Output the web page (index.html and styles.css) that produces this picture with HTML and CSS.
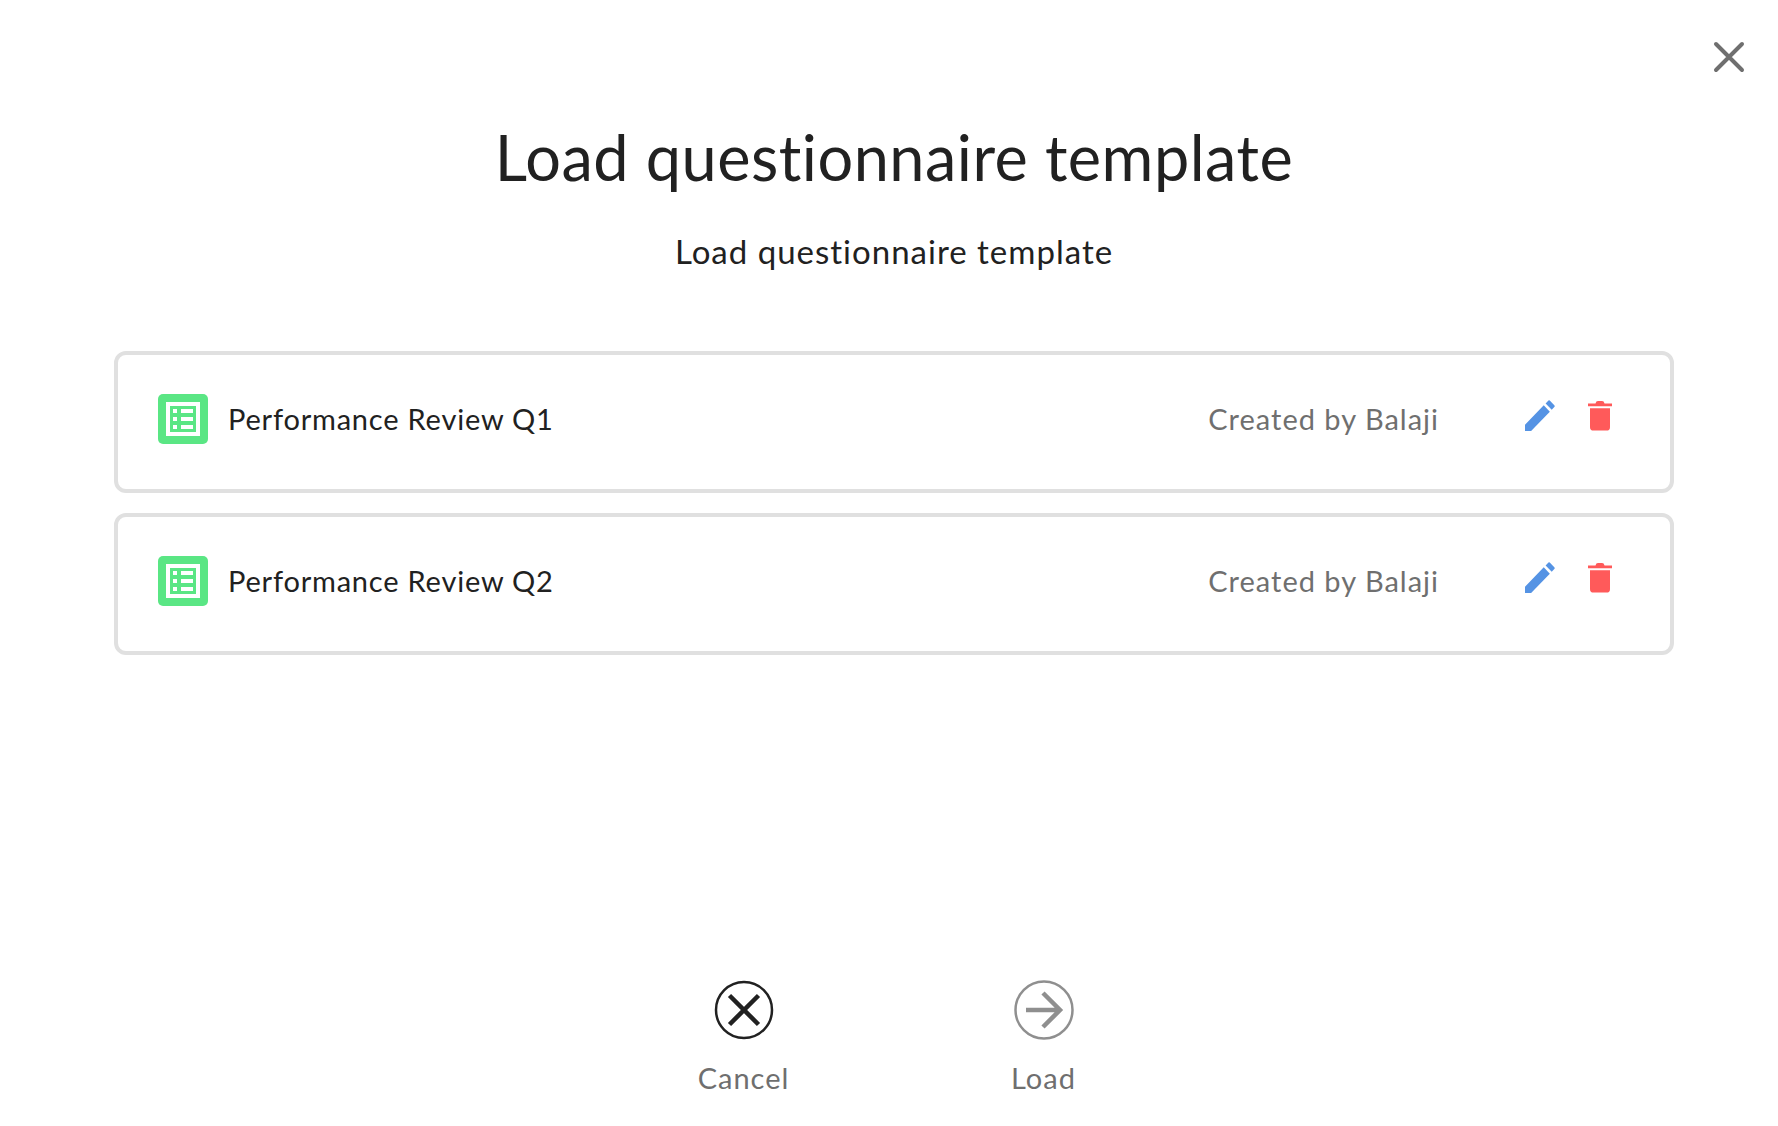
FILE: index.html
```html
<!DOCTYPE html>
<html lang="en">

<head>
    <meta charset="UTF-8">
    <title>Load questionnaire template</title>
    <link rel="stylesheet" href="styles.css">
</head>

<body>
    <div class="modal">
        <button class="close" aria-label="Close">
            <svg width="32" height="32" viewBox="0 0 32 32"><path d="M3 3 L29 29 M29 3 L3 29" /></svg>
        </button>

        <h1>Load questionnaire template</h1>
        <p class="subtitle">Load questionnaire template</p>

        <div class="list">
            <div class="row">
                <span class="form-icon">
                    <svg width="34" height="34" viewBox="0 0 34 34">
                        <rect x="2" y="2" width="30" height="30" />
                        <path d="M7 9h4M15 9h12M7 17h4M15 17h12M7 25h4M15 25h12" />
                    </svg>
                </span>
                <span class="name">Performance Review Q1</span>
                <span class="author">Created by Balaji</span>
                <svg class="edit" width="30" height="31" viewBox="0 0 32 32" preserveAspectRatio="none">
                    <path d="M0 32V25.5L20 5.5L26.5 12L6.5 32Z M22 3.5L25 0.5Q25.7 0 26.4 0.5L31.5 5.6Q32 6.3 31.5 7L28.5 10Z" />
                </svg>
                <svg class="trash" width="24" height="31" viewBox="0 0 24 32" preserveAspectRatio="none">
                    <path d="M0 3.5H7.5Q8 1 10 1H14Q16 1 16.5 3.5H24V6.5H0Z M2 8.5H22V28Q22 31.5 18.5 31.5H5.5Q2 31.5 2 28Z" />
                </svg>
            </div>
            <div class="row">
                <span class="form-icon">
                    <svg width="34" height="34" viewBox="0 0 34 34">
                        <rect x="2" y="2" width="30" height="30" />
                        <path d="M7 9h4M15 9h12M7 17h4M15 17h12M7 25h4M15 25h12" />
                    </svg>
                </span>
                <span class="name">Performance Review Q2</span>
                <span class="author">Created by Balaji</span>
                <svg class="edit" width="30" height="31" viewBox="0 0 32 32" preserveAspectRatio="none">
                    <path d="M0 32V25.5L20 5.5L26.5 12L6.5 32Z M22 3.5L25 0.5Q25.7 0 26.4 0.5L31.5 5.6Q32 6.3 31.5 7L28.5 10Z" />
                </svg>
                <svg class="trash" width="24" height="31" viewBox="0 0 24 32" preserveAspectRatio="none">
                    <path d="M0 3.5H7.5Q8 1 10 1H14Q16 1 16.5 3.5H24V6.5H0Z M2 8.5H22V28Q22 31.5 18.5 31.5H5.5Q2 31.5 2 28Z" />
                </svg>
            </div>
        </div>

        <div class="actions">
            <button class="action cancel">
                <svg width="60" height="60" viewBox="0 0 60 60">
                    <circle cx="30" cy="30" r="28" />
                    <path d="M15.5 15.5 L44.5 44.5 M44.5 15.5 L15.5 44.5" />
                </svg>
                <span>Cancel</span>
            </button>
            <button class="action load">
                <svg width="60" height="60" viewBox="0 0 60 60">
                    <circle cx="30" cy="30" r="28.5" />
                    <path d="M12 30 H46 M29 13 L46 30 L29 47" />
                </svg>
                <span>Load</span>
            </button>
        </div>
    </div>
</body>

</html>
```

FILE: styles.css
```css
* {
    box-sizing: border-box;
}

html,
body {
    height: 100%;
}

body {
    margin: 0;
    background-color: #fff;
    font-family: "Lato", "Open Sans", sans-serif;
    color: #212121;
    overflow: hidden;
}

button {
    background: none;
    border: none;
    padding: 0;
    font-family: inherit;
    cursor: pointer;
}

.modal {
    position: relative;
    height: 1126px;
    display: flex;
    flex-direction: column;
    align-items: center;
    padding: 121px 104px 0 114px;
}

.close {
    position: absolute;
    top: 41px;
    right: 33px;
    width: 32px;
    height: 32px;
}

.close svg path {
    stroke: #6f6f6f;
    stroke-width: 4;
    stroke-linecap: round;
    fill: none;
}

h1 {
    margin: 0;
    font-size: 63px;
    line-height: 72px;
    font-weight: 400;
    letter-spacing: 0.5px;
}

.subtitle {
    margin: 38px 0 0;
    font-size: 33px;
    line-height: 40px;
    letter-spacing: 1px;
}

.list {
    width: 100%;
    margin-top: 80px;
    display: flex;
    flex-direction: column;
    gap: 20px;
}

.row {
    height: 142px;
    border: 4px solid #e0e0e0;
    border-radius: 12px;
    padding: 39px 58px 0 40px;
    display: flex;
    align-items: flex-start;
}

.form-icon {
    width: 50px;
    height: 50px;
    background-color: #5ae684;
    border-radius: 5px;
    display: flex;
    align-items: center;
    justify-content: center;
    flex-shrink: 0;
}

.form-icon rect,
.form-icon path {
    fill: none;
    stroke: #fff;
    stroke-width: 4;
}

.name {
    margin-left: 20px;
    font-size: 29px;
    line-height: 50px;
    letter-spacing: 0.8px;
    flex: 1;
}

.author {
    font-size: 29px;
    line-height: 50px;
    letter-spacing: 1px;
    color: #6f6f6f;
    margin-right: 86px;
}

.edit {
    fill: #5593e4;
    margin: 6px 33px 0 0;
}

.trash {
    fill: #ff5a5a;
    margin-top: 6px;
}

.actions {
    position: absolute;
    top: 980px;
    left: 9px;
    right: 0;
    display: flex;
    justify-content: center;
    gap: 220px;
}

.action {
    width: 80px;
    display: flex;
    flex-direction: column;
    align-items: center;
    gap: 20px;
    font-size: 29px;
    line-height: 36px;
    letter-spacing: 1px;
    color: #6f6f6f;
}

.action svg {
    fill: none;
}

.cancel circle {
    stroke: #212121;
    stroke-width: 2.5;
}

.cancel path {
    stroke: #212121;
    stroke-width: 4.5;
}

.load circle {
    stroke: #8f8f8f;
    stroke-width: 2.5;
}

.load path {
    stroke: #8f8f8f;
    stroke-width: 4.5;
}
```
